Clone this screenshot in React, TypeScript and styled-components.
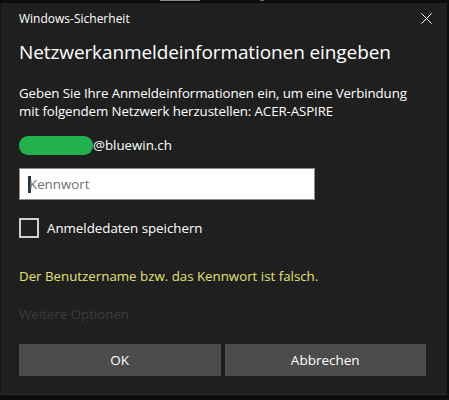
import React from 'react';
import styled, { createGlobalStyle } from 'styled-components';

const GlobalStyle = createGlobalStyle`
  html, body {
    margin: 0;
    padding: 0;
    background: #0c0c0c;
  }
  * {
    box-sizing: border-box;
  }
`;

const fontStack = `"Open Sans", "Noto Sans", sans-serif`;

const Screen = styled.div`
  width: 449px;
  height: 400px;
  display: flex;
  flex-direction: column;
  background: #0c0c0c;
  overflow: hidden;
  font-family: ${fontStack};
`;

const BackdropStrip = styled.div`
  height: 3px;
  flex: none;
  background:
    repeating-linear-gradient(90deg, transparent 0 160px, #8a8a8a 160px 200px, transparent 200px 260px, #6a6a6a 260px 264px, transparent 264px 449px);
  background-size: 100% 1px;
  background-repeat: no-repeat;
  background-position: 0 0;
`;

const Dialog = styled.div`
  flex: 1;
  display: flex;
  flex-direction: column;
  background: #1f1f1f;
  border-left: 1px solid #141414;
  border-right: 2px solid #0a0a0a;
  border-bottom: 1px solid #2c2c2c;
  margin-bottom: 5px;
  padding: 0 15px 0 18px;
  color: #ffffff;
`;

const TitleBar = styled.div`
  height: 30px;
  display: flex;
  align-items: center;
  justify-content: space-between;
`;

const Caption = styled.span`
  font-size: 12px;
  color: #ffffff;
  padding-top: 1px;
`;

const CloseIcon = styled.svg`
  width: 11px;
  height: 11px;
  margin-top: 1px;
`;

const Heading = styled.h1`
  margin: 5px 0 0;
  font-size: 19px;
  font-weight: 400;
  line-height: 28px;
  letter-spacing: -0.1px;
  color: #ffffff;
`;

const Message = styled.p`
  margin: 18px 0 0;
  font-size: 13.3px;
  line-height: 18px;
  letter-spacing: -0.1px;
  color: #ffffff;
`;

const AccountRow = styled.div`
  margin-top: 15px;
  height: 20px;
  display: flex;
  align-items: center;
  font-size: 13.3px;
`;

const Redaction = styled.span`
  width: 74px;
  height: 19px;
  border-radius: 9px;
  background: #22b14c;
`;

const PasswordBox = styled.div`
  margin-top: 13px;
  width: 296px;
  height: 32px;
  background: #ffffff;
  border: 1px solid #8c8c8c;
  display: flex;
  align-items: center;
  padding-left: 8px;
  font-size: 13.3px;
  color: #6f6f6f;
`;

const Caret = styled.span`
  width: 3px;
  height: 17px;
  background: #333333;
  margin-right: -2px;
`;

const CheckRow = styled.label`
  margin-top: 18px;
  display: flex;
  align-items: center;
  gap: 8px;
  font-size: 13.3px;
`;

const CheckBox = styled.span`
  width: 20px;
  height: 20px;
  border: 2px solid #cfcfcf;
`;

const ErrorText = styled.p`
  margin: 29px 0 0;
  font-size: 13.3px;
  line-height: 18px;
  color: #e4e177;
`;

const MoreOptions = styled.p`
  margin: 20px 0 0;
  font-size: 13.3px;
  line-height: 18px;
  color: #3d3d3d;
`;

const ButtonRow = styled.div`
  margin-top: 21px;
  display: grid;
  grid-template-columns: 1fr 1fr;
  gap: 4px;
  width: 407px;
`;

const Button = styled.button`
  height: 32px;
  border: none;
  background: #4c4c4c;
  color: #ffffff;
  font-family: ${fontStack};
  font-size: 13.5px;
`;

export default function App() {
  return (
    <>
      <GlobalStyle />
      <Screen>
        <BackdropStrip />
        <Dialog>
          <TitleBar>
            <Caption>Windows-Sicherheit</Caption>
            <CloseIcon viewBox="0 0 11 11">
              <path d="M0.5 0.5 L10.5 10.5 M10.5 0.5 L0.5 10.5" stroke="#ffffff" strokeWidth="1" />
            </CloseIcon>
          </TitleBar>
          <Heading>Netzwerkanmeldeinformationen eingeben</Heading>
          <Message>
            Geben Sie Ihre Anmeldeinformationen ein, um eine Verbindung
            <br />
            mit folgendem Netzwerk herzustellen: ACER-ASPIRE
          </Message>
          <AccountRow>
            <Redaction />
            <span>@bluewin.ch</span>
          </AccountRow>
          <PasswordBox>
            <Caret />
            <span>Kennwort</span>
          </PasswordBox>
          <CheckRow>
            <CheckBox />
            <span>Anmeldedaten speichern</span>
          </CheckRow>
          <ErrorText>Der Benutzername bzw. das Kennwort ist falsch.</ErrorText>
          <MoreOptions>Weitere Optionen</MoreOptions>
          <ButtonRow>
            <Button>OK</Button>
            <Button>Abbrechen</Button>
          </ButtonRow>
        </Dialog>
      </Screen>
    </>
  );
}
